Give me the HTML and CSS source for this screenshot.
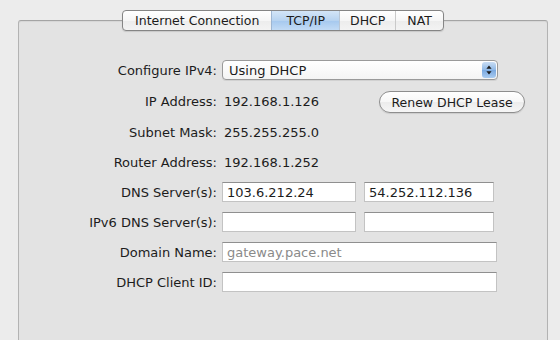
FILE: index.html
```html
<!DOCTYPE html>
<html lang="en">
<head>
    <meta charset="UTF-8">
    <title>TCP/IP</title>
    <link rel="stylesheet" href="styles.css">
</head>
<body>
    <div class="pane">
        <div class="tabs">
            <div class="tab">Internet Connection</div>
            <div class="tab selected">TCP/IP</div>
            <div class="tab">DHCP</div>
            <div class="tab">NAT</div>
        </div>

        <div class="box">
            <div class="form">
                <label class="label">Configure IPv4:</label>
                <div class="select wide">
                    <span>Using DHCP</span>
                    <span class="stepper">
                        <svg width="6" height="10" viewBox="0 0 6 10">
                            <path d="M3 0.5 L5.6 3.8 L0.4 3.8 Z M3 9.5 L5.6 6.2 L0.4 6.2 Z" fill="#1a1a1a"/>
                        </svg>
                    </span>
                </div>

                <label class="label">IP Address:</label>
                <div class="value">192.168.1.126</div>
                <button class="renew">Renew DHCP Lease</button>

                <label class="label">Subnet Mask:</label>
                <div class="value wide">255.255.255.0</div>

                <label class="label">Router Address:</label>
                <div class="value wide">192.168.1.252</div>

                <label class="label">DNS Server(s):</label>
                <input class="field" type="text" value="103.6.212.24">
                <input class="field" type="text" value="54.252.112.136">

                <label class="label">IPv6 DNS Server(s):</label>
                <input class="field" type="text">
                <input class="field" type="text">

                <label class="label">Domain Name:</label>
                <input class="field wide" type="text" placeholder="gateway.pace.net">

                <label class="label">DHCP Client ID:</label>
                <input class="field wide" type="text">
            </div>
        </div>
    </div>
</body>
</html>
```

FILE: styles.css
```css
body {
    margin: 0;
    background-color: #ececec;
    font-family: 'DejaVu Sans', 'Liberation Sans', sans-serif;
    font-size: 13px;
    color: #1c1c1c;
    overflow: hidden;
}

.pane {
    padding: 10px 12px 0 18px;
    display: flex;
    flex-direction: column;
}

/* Segmented tab control */
.tabs {
    position: relative;
    z-index: 1;
    align-self: center;
    display: flex;
    height: 19px;
    border: 1px solid #858585;
    border-radius: 4px;
    background: linear-gradient(#ffffff, #f6f6f6 50%, #ececec 51%, #f3f3f3);
    box-shadow: 0 1px 1px rgba(0, 0, 0, 0.12);
    font-size: 12.5px;
    margin-left: 0;
}

.tab {
    padding: 0 12px;
    line-height: 19px;
    text-align: center;
    border-left: 1px solid #c9c9c9;
}

.tab:first-child {
    border-left: none;
    border-radius: 3px 0 0 3px;
}

.tab:last-child {
    padding: 0 11px;
}

.tab.selected {
    padding: 0 14px;
    background: linear-gradient(#d3e5f7, #b7d3f0 50%, #a5c8ee 51%, #c2dbf5);
    border-left-color: #9eb6d2;
}

.tab.selected + .tab {
    padding: 0 10px;
    border-left-color: #b9c6d4;
}

/* Grouped box */
.box {
    margin-top: -11px;
    height: 340px;
    border: 1px solid #b3b3b3;
    border-top-color: #a4a4a4;
    border-radius: 3px;
    background-color: #e3e3e3;
    box-shadow: inset 0 1px 1px rgba(0, 0, 0, 0.06);
    padding-top: 38px;
}

.form {
    display: grid;
    grid-template-columns: 198px 134px 133px;
    grid-template-rows: 22px 24px;
    grid-auto-rows: 22px;
    column-gap: 5px;
    row-gap: 8px;
}

.form .field + .field {
    margin-left: 3px;
}

.label {
    text-align: right;
    align-self: center;
}

.value {
    align-self: center;
    padding-left: 2px;
}

.wide {
    grid-column: span 2;
}

/* Popup button */
.select {
    align-self: center;
    height: 18px;
    width: 268px;
    display: flex;
    align-items: center;
    justify-content: space-between;
    border: 1px solid #9a9a9a;
    border-radius: 4px;
    background: linear-gradient(#ffffff, #f4f4f4);
    box-shadow: 0 1px 0 rgba(0, 0, 0, 0.08);
    padding-left: 6px;
    box-sizing: content-box;
}

.stepper {
    width: 14px;
    height: 16px;
    margin-right: 1px;
    border-radius: 3px;
    background: linear-gradient(#c9ddf4, #8fb8e6 50%, #7aa9e0 51%, #a9cbf0);
    display: flex;
    align-items: center;
    justify-content: center;
}

.stepper svg {
    display: block;
}

/* Push button */
.renew {
    justify-self: start;
    align-self: end;
    margin-left: 18px;
    width: 146px;
    height: 22px;
    padding: 0;
    font-family: inherit;
    font-size: 12.5px;
    color: #1c1c1c;
    border: 1px solid #8e8e8e;
    border-radius: 11px;
    background: linear-gradient(#ffffff, #f7f7f7 50%, #ececec 51%, #f6f6f6);
    box-shadow: 0 1px 1px rgba(0, 0, 0, 0.1);
}

/* Text fields */
.field {
    align-self: center;
    height: 20px;
    box-sizing: border-box;
    margin: 0;
    padding: 0 4px;
    font-family: inherit;
    font-size: 13px;
    color: #1c1c1c;
    background-color: #ffffff;
    border: 1px solid #c3c3c3;
    border-top-color: #8f8f8f;
    border-radius: 0;
    outline: none;
    min-width: 0;
}

.field.wide {
    width: 275px;
}

.field::placeholder {
    color: #8a8a8a;
}
```
